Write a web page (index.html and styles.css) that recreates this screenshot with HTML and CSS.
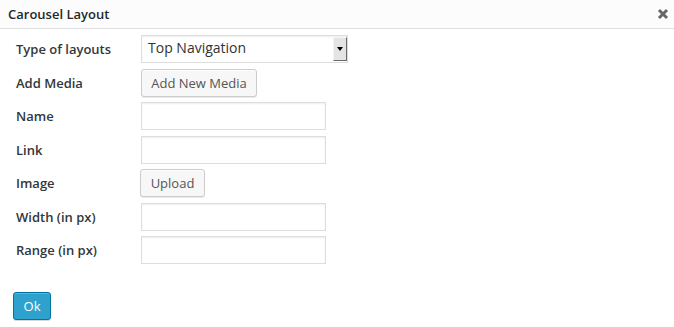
FILE: index.html
```html
<!DOCTYPE html>
<html>
<head>
<meta charset="utf-8">
<link rel="stylesheet" href="styles.css">
</head>
<body>
<div class="dialog">
  <div class="header">
    <span class="title">Carousel Layout</span>
    <span class="close" aria-label="close">
      <svg width="12" height="12" viewBox="0 0 12 12"><path d="M2 2 L10 10 M10 2 L2 10" stroke="#666" stroke-width="3" stroke-linecap="butt"/></svg>
    </span>
  </div>
  <div class="form">
    <div class="row">
      <label class="lbl">Type of layouts</label>
      <div class="select"><span class="select-text">Top Navigation</span><span class="select-arrow"><svg width="6" height="4" viewBox="0 0 6 4"><path d="M0 0 H6 L3 4 Z" fill="#000"/></svg></span></div>
    </div>
    <div class="row">
      <label class="lbl">Add Media</label>
      <button class="btn">Add New Media</button>
    </div>
    <div class="row">
      <label class="lbl">Name</label>
      <input class="inp" type="text">
    </div>
    <div class="row">
      <label class="lbl">Link</label>
      <input class="inp" type="text">
    </div>
    <div class="row">
      <label class="lbl">Image</label>
      <button class="btn btn-upload">Upload</button>
    </div>
    <div class="row">
      <label class="lbl">Width (in px)</label>
      <input class="inp" type="text">
    </div>
    <div class="row">
      <label class="lbl">Range (in px)</label>
      <input class="inp" type="text">
    </div>
  </div>
  <div class="footer">
    <button class="btn-primary">Ok</button>
  </div>
</div>
</body>
</html>
```
FILE: styles.css
```css
html, body {
  margin: 0;
  padding: 0;
  background: #fff;
  font-family: "Open Sans", "Noto Sans", sans-serif;
}
.dialog {
  width: 674px;
  height: 327px;
  background: #fff;
}
.header {
  height: 28px;
  background: #fcfcfc;
  border-bottom: 1px solid #dddddd;
  display: flex;
  align-items: center;
  justify-content: space-between;
  padding: 0 5px 0 8px;
  box-sizing: content-box;
}
.title {
  font-size: 13px;
  font-weight: 600;
  color: #23282d;
}
.close {
  display: flex;
  width: 12px;
  height: 12px;
  margin-top: 0;
}
.form {
  display: flex;
  flex-direction: column;
  gap: 5.5px;
  padding: 6px 0 0 16px;
}
.row {
  display: flex;
  align-items: center;
  height: 28px;
}
.lbl {
  width: 125px;
  flex: none;
  font-size: 13px;
  font-weight: 600;
  color: #32373c;
}
.select {
  width: 207px;
  height: 28px;
  box-sizing: border-box;
  border: 1px solid #dddddd;
  display: flex;
  align-items: stretch;
  justify-content: space-between;
  background: #fff;
  box-shadow: inset 0 1px 2px rgba(0,0,0,.07);
}
.select-text {
  font-size: 14px;
  color: #333;
  padding-left: 6px;
  line-height: 24px;
}
.select-arrow {
  width: 14px;
  margin: 1px 0 1px 0;
  background: #e4e4e4;
  border-left: 1px solid #f4f4f4;
  border-top: 1px solid #f4f4f4;
  border-right: 1px solid #6a6a6a;
  border-bottom: 1px solid #6a6a6a;
  box-sizing: border-box;
  display: flex;
  align-items: center;
  justify-content: center;
}
.btn {
  height: 28px;
  box-sizing: border-box;
  padding: 0;
  white-space: nowrap;
  font-family: inherit;
  font-size: 13px;
  color: #555;
  background: #f7f7f7;
  border: 1px solid #cccccc;
  border-radius: 3px;
  box-shadow: inset 0 1px 0 #fff, 0 1px 0 rgba(0,0,0,.08);
  width: 116px;
}
.btn-upload {
  width: 65px;
  margin-left: -1px;
}
.inp {
  width: 185px;
  height: 28px;
  box-sizing: border-box;
  border: 1px solid #dddddd;
  box-shadow: inset 0 1px 2px rgba(0,0,0,.07);
  padding: 0 5px;
  font-family: inherit;
  font-size: 13px;
  margin: 0;
  outline: none;
}
.footer {
  padding: 28px 0 0 13px;
}
.btn-primary {
  width: 38px;
  height: 28px;
  box-sizing: border-box;
  font-family: inherit;
  font-size: 13px;
  color: #fff;
  background: #2ea2cc;
  border: 1px solid #0074a2;
  border-radius: 3px;
  box-shadow: inset 0 1px 0 rgba(120,200,230,.5), 0 1px 0 rgba(0,0,0,.15);
  padding: 0;
}
```
